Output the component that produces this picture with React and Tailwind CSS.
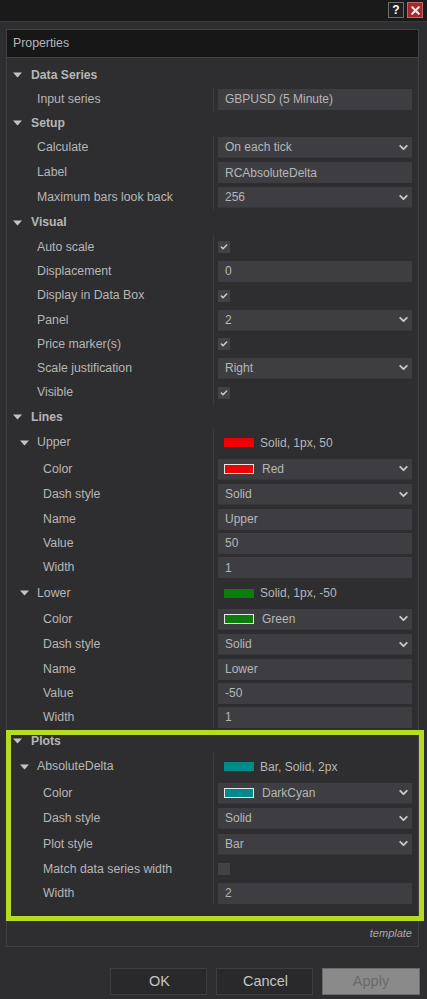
import React from "react";
import { ChevronDown, Check, X } from "lucide-react";

const rows = [
  { t: "g", l: "Data Series", h: 24 },
  { t: "text", l: "Input series", v: "GBPUSD (5 Minute)", h: 24 },
  { t: "g", l: "Setup", h: 24 },
  { t: "select", l: "Calculate", v: "On each tick", h: 25 },
  { t: "text", l: "Label", v: "RCAbsoluteDelta", h: 25 },
  { t: "select", l: "Maximum bars look back", v: "256", h: 25 },
  { t: "g", l: "Visual", h: 25 },
  { t: "check", l: "Auto scale", on: true, h: 24 },
  { t: "text", l: "Displacement", v: "0", h: 24 },
  { t: "check", l: "Display in Data Box", on: true, h: 25 },
  { t: "select", l: "Panel", v: "2", h: 24 },
  { t: "check", l: "Price marker(s)", on: true, h: 24 },
  { t: "select", l: "Scale justification", v: "Right", h: 24 },
  { t: "check", l: "Visible", on: true, h: 25 },
  { t: "g", l: "Lines", h: 24 },
  { t: "sub", l: "Upper", c: "bg-[#f00000]", v: "Solid, 1px, 50", h: 27 },
  { t: "color", l: "Color", c: "bg-[#f00000]", v: "Red", h: 26 },
  { t: "select", l: "Dash style", v: "Solid", in: 1, h: 25 },
  { t: "text", l: "Name", v: "Upper", in: 1, h: 24 },
  { t: "text", l: "Value", v: "50", in: 1, h: 24 },
  { t: "text", l: "Width", v: "1", in: 1, h: 25 },
  { t: "sub", l: "Lower", c: "bg-[#0a7d0a]", v: "Solid, 1px, -50", h: 26 },
  { t: "color", l: "Color", c: "bg-[#0a7d0a]", v: "Green", h: 26 },
  { t: "select", l: "Dash style", v: "Solid", in: 1, h: 25 },
  { t: "text", l: "Name", v: "Lower", in: 1, h: 24 },
  { t: "text", l: "Value", v: "-50", in: 1, h: 24 },
  { t: "text", l: "Width", v: "1", in: 1, h: 24 },
  { t: "g", l: "Plots", h: 24 },
  { t: "sub", l: "AbsoluteDelta", c: "bg-[#008b8b]", v: "Bar, Solid, 2px", h: 27 },
  { t: "color", l: "Color", c: "bg-[#008b8b]", v: "DarkCyan", h: 26 },
  { t: "select", l: "Dash style", v: "Solid", in: 1, h: 25 },
  { t: "select", l: "Plot style", v: "Bar", in: 1, h: 26 },
  { t: "check", l: "Match data series width", on: false, in: 1, h: 24 },
  { t: "text", l: "Width", v: "2", in: 1, h: 24 },
];

function Tri() {
  return (
    <svg width="9" height="6" viewBox="0 0 9 6" className="shrink-0">
      <path d="M0 0.5H9L4.5 5.5Z" fill="#c4c4c4" />
    </svg>
  );
}

function Value({ r }) {
  const box = "flex h-[21px] w-[194px] items-center bg-[#3e3e42] pl-[7px] pr-[2px] text-[12px]";
  if (r.t === "text") return <div className={box}>{r.v}</div>;
  if (r.t === "select" || r.t === "color")
    return (
      <div className={box + " justify-between border-b border-[#37373a]"}>
        <div className="flex items-center">
          {r.t === "color" && <span className={"-ml-[1px] mr-[8px] h-[10px] w-[30px] border border-[#e6e6e6] " + r.c} />}
          {r.v}
        </div>
        <ChevronDown size={13} strokeWidth={3.5} color="#c8c8c8" />
      </div>
    );
  if (r.t === "check")
    return (
      <div className="flex h-[12px] w-[12px] items-center justify-center bg-[#424246]">
        {r.on && <Check size={8} strokeWidth={4.5} color="#cccccc" />}
      </div>
    );
  return (
    <div className="flex items-center pl-[6px] text-[12px]">
      <span className={"mr-[6px] h-[9px] w-[30px] " + r.c} />
      {r.v}
    </div>
  );
}

function Row({ r }) {
  if (r.t === "g")
    return (
      <div style={{ height: r.h }} className="flex items-center pl-[6px] text-[12.2px] font-bold">
        <Tri />
        <span className="ml-[9px]">{r.l}</span>
      </div>
    );
  const sub = r.in || r.t === "color";
  return (
    <div style={{ height: r.h }} className="flex items-center">
      <div className={"flex h-full w-[207px] items-center border-r border-[#3c3c3f] " + (r.t === "sub" ? "pl-[13px]" : sub ? "pl-[36px]" : "pl-[30px]")}>
        {r.t === "sub" && <span className="mr-[8px] flex"><Tri /></span>}
        {r.l}
      </div>
      <div className="flex w-[204px] items-center pl-[4px]">
        <Value r={r} />
      </div>
    </div>
  );
}

export default function App() {
  return (
    <div className="relative flex h-[999px] w-[427px] flex-col overflow-hidden bg-[#2e2e30] font-['Liberation_Sans',Arial,sans-serif] text-[12.3px] text-[#b6b6b6]">
      <div className="flex h-[22px] items-start justify-end gap-[3px] border-b border-[#3a3a3c] bg-[#1a1a1b] pr-[4px] pt-[2px]">
        <div className="flex h-[16px] w-[16px] items-center justify-center border border-[#6e6e70] bg-[#1e2024] text-[12px] font-bold text-white">?</div>
        <div className="flex h-[16px] w-[16px] items-center justify-center border border-[#b86a6a] bg-[#a8262c]">
          <X size={13} strokeWidth={4} color="#f3e6e6" />
        </div>
      </div>
      <div className="ml-[6px] mt-[7px] w-[413px] border border-[#414143]">
        <div className="flex h-[28px] items-center border-b border-[#454547] bg-[#171718] pl-[6px]">Properties</div>
        <div className="pb-[20px] pt-[5px]">
          {rows.map((r, i) => <Row key={i} r={r} />)}
        </div>
        <div className="flex h-[21px] items-start justify-end pr-[6px] text-[11px] italic text-[#a8a8a8]">template</div>
      </div>
      <div className="mt-[21px] flex gap-[9px] pl-[110px] text-[14.5px]">
        <div className="flex h-[27px] w-[97px] items-center justify-center border border-[#3f3f41] bg-[#29292b] pl-[2px] text-[#c4c4c4]">OK</div>
        <div className="flex h-[27px] w-[97px] items-center justify-center border border-[#3f3f41] bg-[#29292b] pl-[2px] text-[#c4c4c4]">Cancel</div>
        <div className="flex h-[27px] w-[98px] items-center justify-center border border-[#6a6a6a] bg-[#8a8a8a] text-[#6a6a6a]">Apply</div>
      </div>
      <div className="absolute left-[6px] top-[730px] h-[191px] w-[418px] border-[5px] border-[#b5dc22]" />
    </div>
  );
}
